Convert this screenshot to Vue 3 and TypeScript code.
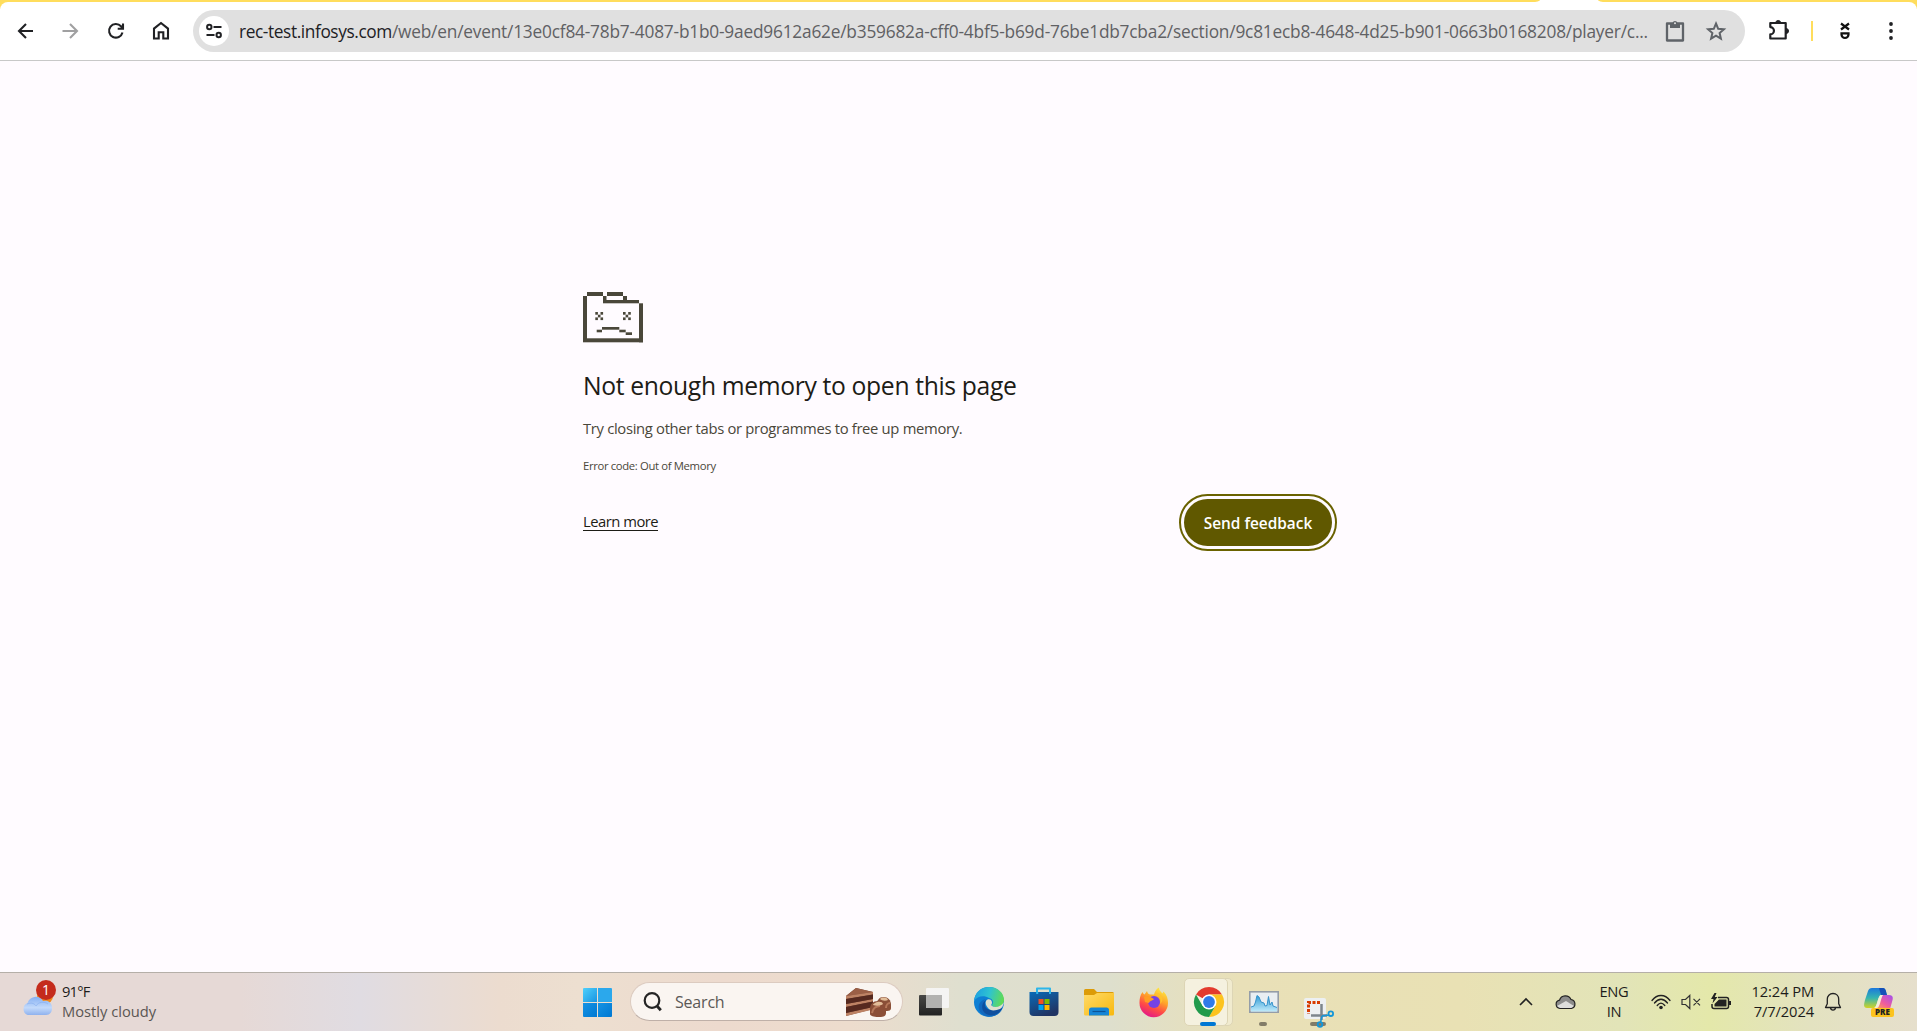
<script setup lang="ts">
interface Box { x: number; y: number; w: number; h: number }

const box = (x: number, y: number, w: number, h: number): Box => ({ x, y, w, h })

const folder: Box[] = [
  box(0, 4, 4, 46), box(4, 0, 16, 4), box(20, 4, 3.5, 7), box(24, 0, 16, 4),
  box(40, 4, 4, 4), box(20, 8, 36, 3.3), box(56, 11.3, 4, 39), box(0, 46.3, 60, 4),
]
const mouth: Box[] = [
  box(13.7, 37.7, 5.3, 2.6), box(19, 35, 17.3, 2.7), box(36.3, 37.7, 6.4, 2.6), box(42.7, 40.3, 6.3, 2.7),
]
const eye = (x: number): Box[] =>
  [[0, 0], [2, 0], [1, 1], [0, 2], [2, 2]].map(([c, r]) => box(x + c * 2.6, 20 + r * 2.7, 2.6, 2.7))
const sadFolder: Box[] = [...folder, ...mouth, ...eye(12.3), ...eye(40)]

const urlHost = 'rec-test.infosys.com'
const urlPath = '/web/en/event/13e0cf84-78b7-4087-b1b0-9aed9612a62e/b359682a-cff0-4bf5-b69d-76be1db7cba2/section/9c81ecb8-4648-4d25-b901-0663b0168208/player/c...'
</script>

<template>
  <div class="screen">
    <header class="toolbar">
      <div class="frame"><i class="strip first"></i><i class="strip second"></i></div>
      <div class="bar">
        <svg class="nav back" width="24" height="24" viewBox="0 0 24 24"><path d="M20 12H6M13 5l-7 7 7 7" /></svg>
        <svg class="nav forward" width="24" height="24" viewBox="0 0 24 24"><path d="M4.500 12h14.500M12 5l7 7-7 7" /></svg>
        <svg class="nav reload" width="24" height="24" viewBox="0 0 24 24"><path d="M18.500 13.500A6.800 6.800 0 1 1 17 7.300L18.500 9M19 4.500v5.200h-5.300" /></svg>
        <svg class="nav home" width="24" height="24" viewBox="0 0 24 24"><path d="M5 19.500V9.600l7-5.600 7 5.600v9.900h-4.700v-6.200H9.700v6.200z" /></svg>
        <div class="omnibox">
          <span class="site">
            <svg width="18" height="18" viewBox="0 0 18 18"><g fill="none" stroke="#202124" stroke-width="2"><circle cx="4.300" cy="5" r="2.200" /><circle cx="13.700" cy="13" r="2.200" /><path d="M8.500 5H16.500M1.500 13H9.500" /></g></svg>
          </span>
          <span class="url"><b>{{ urlHost }}</b>{{ urlPath }}</span>
          <svg class="clip" width="24" height="24" viewBox="0 0 24 24"><path d="M4 4.500h16v17H4z" fill="none" stroke="#5f6368" stroke-width="2.300" stroke-linejoin="round" /><path d="M7 4h2.500a2.600 2.600 0 0 1 5 0H17v5H7z" fill="#5f6368" /><circle cx="12" cy="4.300" r="1" fill="#e0e0e0" /></svg>
          <svg class="star" width="24" height="24" viewBox="0 0 24 24"><path d="M12 4.500l2.200 5.300 5.700.5-4.300 3.700 1.300 5.600-4.900-3-4.900 3 1.300-5.600L4.100 10.300l5.700-.5z" fill="none" stroke="#5f6368" stroke-width="2" /></svg>
        </div>
        <svg class="puzzle" width="24" height="24" viewBox="0 0 24 24"><path d="M3.300 4h15.400v15.500H3.300v-4.100a3.500 3.500 0 0 0 0-7.300z" fill="none" stroke="#202124" stroke-width="2.200" stroke-linejoin="round" /><path d="M8.700 4a2.500 2.500 0 0 1 5 0zM19 9.500a2.500 2.500 0 0 1 0 5z" fill="#202124" stroke="#202124" /></svg>
        <i class="divider"></i>
        <svg class="profile" width="14" height="20" viewBox="0 0 14 20"><g fill="none" stroke="#111" stroke-width="2.200"><path d="M3 2.500l8 6M11 2.500l-8 6" /><path d="M3.500 12.300h7v1.200a3.500 3.500 0 0 1-7 0z" /></g></svg>
        <svg class="dots" width="6" height="20" viewBox="0 0 6 20"><g fill="#202124"><circle cx="3" cy="3" r="1.900" /><circle cx="3" cy="10" r="1.900" /><circle cx="3" cy="17" r="1.900" /></g></svg>
      </div>
    </header>

    <main class="page">
      <section class="error">
        <svg class="sad" width="60" height="51" viewBox="0 0 60 51">
          <rect v-for="(p, i) in sadFolder" :key="i" :x="p.x" :y="p.y" :width="p.w" :height="p.h" fill="#4a473a" />
        </svg>
        <h1>Not enough memory to open this page</h1>
        <p class="hint">Try closing other tabs or programmes to free up memory.</p>
        <p class="code">Error code: Out of Memory</p>
        <div class="actions">
          <a class="learn">Learn more</a>
          <button class="send">Send feedback</button>
        </div>
      </section>
    </main>

    <footer class="taskbar">
      <div class="weather">
        <svg width="36" height="40" viewBox="0 0 36 40">
          <defs><linearGradient id="cloud" x1="0" y1="0" x2="0" y2="1"><stop offset="0" stop-color="#86b0f3" /><stop offset=".6" stop-color="#c3dafb" /><stop offset="1" stop-color="#8fb2ee" /></linearGradient></defs>
          <circle cx="24" cy="17" r="8" fill="#f28a1c" />
          <path d="M6.500 36a6.500 6.500 0 0 1 0-12A8.500 8.500 0 0 1 22 22a7 7 0 0 1 9 7.500C31 33 29 36 25 36z" fill="url(#cloud)" />
          <path d="M6 25c5-2 8 0 9 2 2-4 8-5 12-2" fill="none" stroke="#7ba5ea" stroke-opacity=".45" />
          <circle cx="25" cy="11" r="10" fill="#c42b1c" />
          <text x="25" y="16" text-anchor="middle" font-size="14" fill="#fff">1</text>
        </svg>
        <div class="lines"><span class="temp">91°F</span><span class="sky">Mostly cloudy</span></div>
      </div>

      <svg class="start" width="29" height="29" viewBox="0 0 29 29">
        <defs><linearGradient id="win" x1="0" y1="0" x2="1" y2="1"><stop offset="0" stop-color="#4fd0fb" /><stop offset="1" stop-color="#1794e2" /></linearGradient><linearGradient id="win2" x1="0" y1="0" x2="1" y2="1"><stop offset="0" stop-color="#1593e4" /><stop offset="1" stop-color="#0078d2" /></linearGradient></defs>
        <path d="M1 0h13v14H0V1a1 1 0 0 1 1-1z" fill="url(#win)" /><path d="M15 0h13a1 1 0 0 1 1 1v13H15z" fill="#2ba8ec" /><path d="M0 15h14v14H1a1 1 0 0 1-1-1z" fill="url(#win2)" /><path d="M15 15h14v13a1 1 0 0 1-1 1H15z" fill="url(#win2)" />
      </svg>

      <div class="search">
        <svg width="20" height="20" viewBox="0 0 20 20"><g fill="none" stroke="#252525" stroke-width="2.200"><circle cx="9" cy="8.500" r="7.300" /><path d="M13.800 13.800l4 4.500" stroke-width="2.800" /></g></svg>
        <span>Search</span>
        <svg class="cake" width="47" height="30" viewBox="0 0 47 30">
          <path d="M1 9L11 1l17 4v17L1 29z" fill="#6f4031" />
          <path d="M1 9L11 1l17 4z" fill="#9b5f46" />
          <path d="M1 9l27-4v2.500L1 12zM1 17l27-5v2.500L1 20zM1 26l27-6v2.500L1 29z" fill="#bd8264" />
          <path d="M1 12l27-4.500V12L1 17zM1 20l27-5.500V20L1 26z" fill="#56291f" />
          <path d="M32 24v-6c0-5 2-8 6.500-8S46 13 46 18v3c0 3-3 3-6 3z" fill="#8a5038" />
          <path d="M25 27v-5c0-5 3-8 8-8s8 3 8 8v4c0 4-4 4-8 4s-8-1-8-3z" fill="#8b4e37" />
          <path d="M27 26c1-5 4-7 8-7M41 21c0-3 2-5 4-5" stroke="#b6785a" stroke-width="2" fill="none" />
          <path d="M28 18c1-3 9-5 10-1-2 2-7 2-10 1zM35 12c2-2 7-2 8 1-2 1-6 1-8-1z" fill="#e2bd99" />
        </svg>
      </div>

      <div class="apps">
        <span class="app"><svg width="30" height="30" viewBox="0 0 30 30"><defs><linearGradient id="tv" x1="0" y1="0" x2="0" y2="1"><stop offset="0" stop-color="#484846" /><stop offset="1" stop-color="#222" /></linearGradient></defs><rect y="8" width="23" height="20.500" rx="1" fill="url(#tv)" /><rect x="7" y="1" width="23" height="20" rx="1" fill="#f6f6f6" fill-opacity=".9" /><path d="M7 8h16v13H8a1 1 0 0 1-1-1z" fill="#b2b2b0" /></svg></span>
        <span class="app"><svg width="30" height="30" viewBox="0 0 30 30">
          <defs><linearGradient id="edgeTop" x1="0" y1=".3" x2="1" y2=".5"><stop offset="0" stop-color="#1b9fe2" /><stop offset=".5" stop-color="#2fc3d0" /><stop offset="1" stop-color="#61dc52" /></linearGradient></defs>
          <circle cx="15" cy="15" r="15" fill="#0e7fd4" />
          <path d="M0 14C1 5 7 0 15 0c9 0 15 6 15 13 0 5-4 7-8 7-3 0-5-1-3.500-3 1-2 .5-5-3.500-6C10 8 3 9 0 14z" fill="url(#edgeTop)" />
          <path d="M12 12c-5 3-4 12 3 15 5 2 10 0 13-4-4 6-13 9-20 4-5-4-5-13 4-15z" fill="#1268be" />
          <path d="M12 13c-3 5 0 10 6 10 4 0 7-1 9.500-3 2 1-3 10-12.500 8C6 26 7 15 12 13z" fill="#104f9e" />
          <path d="M12 14c1.500-3 6-2 6 1.500 0 2-1.500 2 0 3.500 3 2 9 1 12-4-1 4-2 6-4 7-5 2-10 2-12-1-2-2-3-5-2-7z" fill="#dfdfcf" />
        </svg></span>
        <span class="app"><svg width="30" height="30" viewBox="0 0 30 30"><defs><linearGradient id="store" x1="0" y1="0" x2=".5" y2="1"><stop offset="0" stop-color="#096bb8" /><stop offset="1" stop-color="#203464" /></linearGradient></defs><path d="M8 8V1.500h13V8" fill="none" stroke="#2cb6ea" stroke-width="2" stroke-linejoin="round" /><path d="M.500 5h29v20a4 4 0 0 1-4 4h-21a4 4 0 0 1-4-4z" fill="url(#store)" /><path d="M7.200 5h2v2h-2zM20 5h2v2h-2z" fill="#2cb6ea" /><path fill="#f25022" d="M9.500 12h5v5h-5z" /><path fill="#7fba00" d="M15.500 12h5v5h-5z" /><path fill="#00a4ef" d="M9.500 18h5v5h-5z" /><path fill="#ffb900" d="M15.500 18h5v5h-5z" /></svg></span>
        <span class="app"><svg width="30" height="30" viewBox="0 0 30 30"><defs><linearGradient id="fold" x1="0" y1="0" x2="1" y2="1"><stop offset="0" stop-color="#ffda68" /><stop offset="1" stop-color="#f8b80e" /></linearGradient></defs><path d="M0 3.500A1.500 1.500 0 0 1 1.500 2H10l3 3h15.500A1.500 1.500 0 0 1 30 6.500V10H0z" fill="#dc9b08" /><path d="M0 8h10l3-2h17v21a1.500 1.500 0 0 1-1.500 1.500h-27A1.500 1.500 0 0 1 0 27z" fill="url(#fold)" /><path d="M5 28.500V23a2.500 2.500 0 0 1 2.500-2.500h15A2.500 2.500 0 0 1 25 23v5.500z" fill="#1585d6" /><path d="M8.500 24.500h13" stroke="#0a5398" stroke-width="1.200" /></svg></span>
        <span class="app"><svg width="30" height="30" viewBox="0 0 30 30"><defs><linearGradient id="fox" x1=".8" y1="0" x2=".35" y2="1"><stop offset="0" stop-color="#fff044" /><stop offset=".4" stop-color="#ffa52a" /><stop offset=".7" stop-color="#ff4c45" /><stop offset="1" stop-color="#e31888" /></linearGradient></defs><path d="M3.500 5c.5 1 1 2 2 2.500L8 4c.5 2 1 3 3 3.500h4c1-3 2-5.500 5-7 0 3 2 4 3.500 6l1-2C28 8 29 12 29 16a14.200 14.200 0 0 1-28.500 0C.500 12 1 8 3.500 5z" fill="url(#fox)" /><circle cx="15" cy="15" r="6" fill="#7542e5" /><path d="M5 10c3-2 6-1 8 1l2 1c-1 2-4 1-5 4l-4-1z" fill="#ff9d22" /><path d="M14 8c6-1 9 4 7 9 4-3 3-9-2-11z" fill="#ffc22e" /></svg></span>
        <span class="app chrome"><i class="tail"></i><i class="tile"></i><svg width="30" height="30" viewBox="0 0 30 30"><path d="M15 0a15 15 0 0 1 13 7.500H15L8.500 11.200 2 7.500A15 15 0 0 1 15 0z" fill="#e33b2e" /><path d="M28 7.500A15 15 0 0 1 15 30l6.500-11.200L15 7.500z" fill="#fcc31e" /><path d="M2 7.500A15 15 0 0 0 15 30l6.500-11.200h-13z" fill="#219a4b" /><circle cx="15" cy="15" r="7.500" fill="#fff" /><circle cx="15" cy="15" r="5.900" fill="#2f7be9" /></svg><i class="mark wide"></i></span>
        <span class="app"><svg width="30" height="30" viewBox="0 0 30 30"><defs><linearGradient id="perf" x1="0" y1="0" x2="0" y2="1"><stop offset="0" stop-color="#2f9bd5" /><stop offset="1" stop-color="#c0eafa" /></linearGradient></defs><rect x=".8" y="4.800" width="28.400" height="20.400" fill="#e9eef2" stroke="#949da8" stroke-width="1.600" /><path d="M2 24.500V20l3-1 1.500-4 1.500-6.500 2 1.500 2 5 3 1 1 3 2-.5 1.500-9L21 18l2-3 1 4 4 1.500v4z" fill="url(#perf)" /><path d="M2 20l3-1 1.500-4 1.500-6.500 2 1.500 2 5 3 1 1 3 2-.5 1.500-9L21 18l2-3 1 4 4 1.500" fill="none" stroke="#3994cb" /></svg><i class="mark"></i></span>
        <span class="app snip"><i class="mark wide-grey"></i><svg width="30" height="30" viewBox="0 0 30 30"><rect width="22" height="21" rx="2" fill="#edf0f2" /><path d="M16 4.500H4.500V16" fill="none" stroke="#d83b01" stroke-width="3" stroke-dasharray="3 1.500" /><path d="M17.500 6v16M7 17.500h16" stroke="#7d858c" stroke-width="2.500" /><circle cx="26.800" cy="15.700" r="2.300" fill="none" stroke="#1596d8" stroke-width="1.800" /><circle cx="16" cy="26.500" r="2.300" fill="none" stroke="#1596d8" stroke-width="1.800" /><path d="M18 18l7-1M18 18l-1.500 6.500" stroke="#1596d8" stroke-width="1.500" /></svg></span>
      </div>

      <div class="tray">
        <span class="cell c40"><svg width="14" height="8" viewBox="0 0 14 8"><path d="M1 7l6-6 6 6" fill="none" stroke="#222" stroke-width="1.600" /></svg></span>
        <span class="cell c40"><svg width="22" height="16" viewBox="0 0 22 16"><path d="M5 14.500a4.200 4.200 0 0 1-.5-8.300A6.200 6.200 0 0 1 16 5.500a4.600 4.600 0 0 1 .5 9z" fill="#8d8d8c" /><path d="M2 12l9-5 8 5-2 2.500H5z" fill="#dededc" /><path d="M5 14.500a4.200 4.200 0 0 1-.5-8.300A6.200 6.200 0 0 1 16 5.500a4.600 4.600 0 0 1 .5 9z" fill="none" stroke="#222" stroke-width="1.200" /></svg></span>
        <div class="lines lang"><span>ENG</span><span>IN</span></div>
        <span class="cell c30"><svg width="20" height="16" viewBox="0 0 20 16"><g fill="none" stroke="#222" stroke-width="1.300" stroke-linecap="round"><path d="M1 6.500c5-6.700 13-6.700 18 0" /><path d="M3.500 9c4-5 9-5 13 0M6.200 11.500c2.500-3.200 5-3.200 7.600 0" /></g><circle cx="10" cy="13.500" r="1.800" fill="#222" /></svg></span>
        <span class="cell c30"><svg width="20" height="16" viewBox="0 0 20 16"><path d="M1 5.500h3.500L8.800 1.500v13L4.500 10.500H1zM12.500 4.800l6.500 6.500M19 4.800l-6.500 6.500" fill="none" stroke="#333" stroke-width="1.200" /></svg></span>
        <span class="cell c30"><svg width="20" height="18" viewBox="0 0 20 18"><path d="M7 4.500h8.500a2 2 0 0 1 2 2v7a2 2 0 0 1-2 2H3a2 2 0 0 1-2-2V11" fill="none" stroke="#222" stroke-width="1.500" /><path d="M8 6.500h7.500v7H3.500V11z" fill="#222" /><path d="M18 8h2v4h-2zM3.500 0L0 6h2.500L1.500 10.500 6.500 4H3.800L5.500 0z" fill="#222" /></svg></span>
        <div class="lines clock"><span>12:24 PM</span><span>7/7/2024</span></div>
        <span class="cell c38"><svg width="18" height="20" viewBox="0 0 18 20"><path d="M9 1.500c-3.500 0-5.700 2.600-5.700 5.700v4.600L1.500 15.500h15l-1.800-3.700V7.200c0-3.100-2.200-5.700-5.700-5.700zM6.500 15.800c.5 3 4.500 3 5 0" fill="none" stroke="#222" stroke-width="1.300" stroke-linejoin="round" /></svg></span>
        <svg class="copilot" width="30" height="29" viewBox="0 0 30 29">
          <defs><linearGradient id="cpl" x1="0" y1="0" x2="0" y2="1"><stop offset="0" stop-color="#1b78dd" /><stop offset=".5" stop-color="#35b5b0" /><stop offset="1" stop-color="#d4d423" /></linearGradient><linearGradient id="cpr" x1="1" y1="0" x2=".2" y2="1"><stop offset="0" stop-color="#a14ff0" /><stop offset=".6" stop-color="#ef5c9c" /><stop offset="1" stop-color="#ff9c56" /></linearGradient></defs>
          <path d="M8 0h11c3 0 3 4 4 7h-6c-3 0-4 13-7 13H3c-4 0-3-4-2-8L4 3c.7-2 2-3 4-3z" fill="url(#cpl)" />
          <path d="M15 0h4c3 0 3 4 4 7h-6z" fill="#1450b8" />
          <path d="M19 7h6c5 0 4 4 3 7l-2 7H11c3 0 4-14 8-14z" fill="url(#cpr)" />
          <path d="M17 7h2c-2 2-3 13-6 13h-3c3 0 4-13 7-13z" fill="#f3eed8" />
          <rect x="7" y="20" width="23" height="9" rx="2" fill="#fcc31e" />
          <text x="18.500" y="27.300" text-anchor="middle" font-size="8" font-weight="800" fill="#222">PRE</text>
        </svg>
      </div>
    </footer>
  </div>
</template>

<style>
body { margin: 0; overflow: hidden; }
</style>

<style scoped>
* { box-sizing: border-box; }
.screen { width: 1917px; height: 1031px; display: flex; flex-direction: column; background: #fffbff; font-family: "Open Sans", "Noto Sans", sans-serif; overflow: hidden; }
svg { flex: none; display: block; overflow: visible; }
.toolbar { height: 61px; flex: none; background: linear-gradient(#ffdd5c 0 9px, #fff 9px); border-bottom: 1px solid #c8c8c8; }
.frame { height: 2px; display: flex; justify-content: space-between; background: #fff; }
.strip { background: #ffdd5c; height: 2px; }
.first { width: 1540px; border-bottom-right-radius: 8px 2px; }
.second { width: 319px; border-bottom-left-radius: 8px 2px; }
.bar { height: 58px; display: flex; align-items: center; background: #fff; border-radius: 8px 8px 0 0; padding-left: 13px; }
.nav { fill: none; stroke: #202124; stroke-width: 2.1; }
.forward { margin-left: 21px; stroke: #a0a0a1; }
.reload { margin-left: 22px; }
.home { margin-left: 21px; }
.omnibox { width: 1552px; height: 42px; margin-left: 20px; border-radius: 21px; background: #e0e0e0; display: flex; align-items: center; padding-left: 6px; }
.site { width: 30px; height: 30px; border-radius: 50%; background: #fff; display: flex; align-items: center; justify-content: center; flex: none; }
.url { width: 1412px; margin-left: 10px; flex: none; white-space: nowrap; font-size: 17.3px; color: #606164; letter-spacing: -0.205px; line-height: 24px; padding-top: 2px; }
.url b { font-weight: 400; color: #202124; letter-spacing: -0.4px; }
.clip { margin-left: 12px; }
.star { margin-left: 17px; }
.puzzle { margin-left: 22px; }
.divider { width: 2px; height: 20px; background: #ffdd5c; margin-left: 20px; }
.profile { margin-left: 25px; }
.dots { margin-left: 36px; }
.page { flex: 1; }
.error { width: 749px; margin: 231px 0 0 583px; color: #4a473a; }
.error h1 { margin: 25px 0 0; font-size: 24.700px; font-weight: 400; line-height: 36px; color: #1d1c16; white-space: nowrap; letter-spacing: -0.35px; }
.hint { margin: 13px 0 0; font-size: 14.800px; line-height: 22px; letter-spacing: -0.32px; white-space: nowrap; }
.code { margin: 18px 0 0; font-size: 11.300px; line-height: 18px; letter-spacing: -0.35px; white-space: nowrap; }
.actions { display: flex; justify-content: space-between; align-items: center; margin-top: 24px; height: 47px; }
.learn { font-size: 14.800px; line-height: 20px; letter-spacing: -0.5px; color: #1d1c16; border-bottom: 1px solid #1d1c16; height: 20px; margin-top: -4px; }
.send { width: 148px; height: 47px; border: 0; border-radius: 24px; background: #605800; color: #fff; font: 600 15.400px "Open Sans", sans-serif; letter-spacing: 0; outline: 2px solid #6a6200; outline-offset: 3px; padding: 2px 0 0; white-space: nowrap; }
.taskbar { flex: none; height: 59px; border-top: 1px solid #b5afa8; display: flex; align-items: center; color: #1d1c1a; background: linear-gradient(90deg, #e6d9d6 0, #e6d9d6 240px, #e0dce2 360px, #ecdccf 500px, #eddfd0 580px, #eddace 720px, #eddccd 850px, #dfdfcf 960px, #dedfcd 1110px, #e9e0b8 1240px, #e9e1b4 1460px, #e2e4b8 1620px, #e4e8aa 1710px, #e3e2c0 1810px, #e6dfcc 1917px); }
.weather { display: flex; align-items: center; width: 560px; padding-left: 21px; }
.weather svg { margin-top: -7px; }
.lines { display: flex; flex-direction: column; font-size: 14.700px; line-height: 20px; white-space: nowrap; letter-spacing: -0.1px; padding-bottom: 3px; }
.weather .lines { margin-left: 5px; }
.temp { letter-spacing: -0.8px; }
.sky { color: #5a5653; letter-spacing: 0; }
.start { margin-left: 23px; }
.search { width: 273px; height: 39px; margin: -1px 0 0 18px; border-radius: 20px; background: #faf5f1; border: 1px solid #dccbc0; border-bottom-color: #bfb0a8; display: flex; align-items: center; padding-left: 12px; }
.search span { margin-left: 12px; width: 170px; font-size: 16px; letter-spacing: -0.2px; color: #5b5856; }
.apps { display: flex; margin-left: 3px; height: 58px; }
.app { width: 55px; height: 58px; display: flex; align-items: center; justify-content: center; position: relative; }
.app svg { position: relative; }
.tile { position: absolute; left: 3px; top: 5px; width: 44px; height: 48px; border-radius: 5px; background: #f5f1df; border: 1px solid #ddd5b5; }
.tail { position: absolute; left: 12px; top: 5px; width: 40px; height: 48px; border-radius: 5px; background: #f1ebcf; border: 1px solid #ddd5b5; }
.mark { position: absolute; bottom: 5px; left: 23px; width: 8px; height: 4px; border-radius: 2px; background: #827c68; }
.wide { left: 19px; width: 16px; background: #0078d4; }
.wide-grey { left: 19px; width: 16px; }
.snip svg { margin-top: 22px; }
.tray { margin-left: 160px; display: flex; align-items: center; }
.cell { display: flex; align-items: center; justify-content: center; }
.c40 { width: 40px; }
.c30 { width: 30px; }
.c38 { width: 38px; }
.lang { width: 60px; align-items: center; padding-right: 4px; letter-spacing: -0.3px; }
.clock { width: 78px; align-items: flex-end; }
.copilot { margin-left: 12px; }
</style>
